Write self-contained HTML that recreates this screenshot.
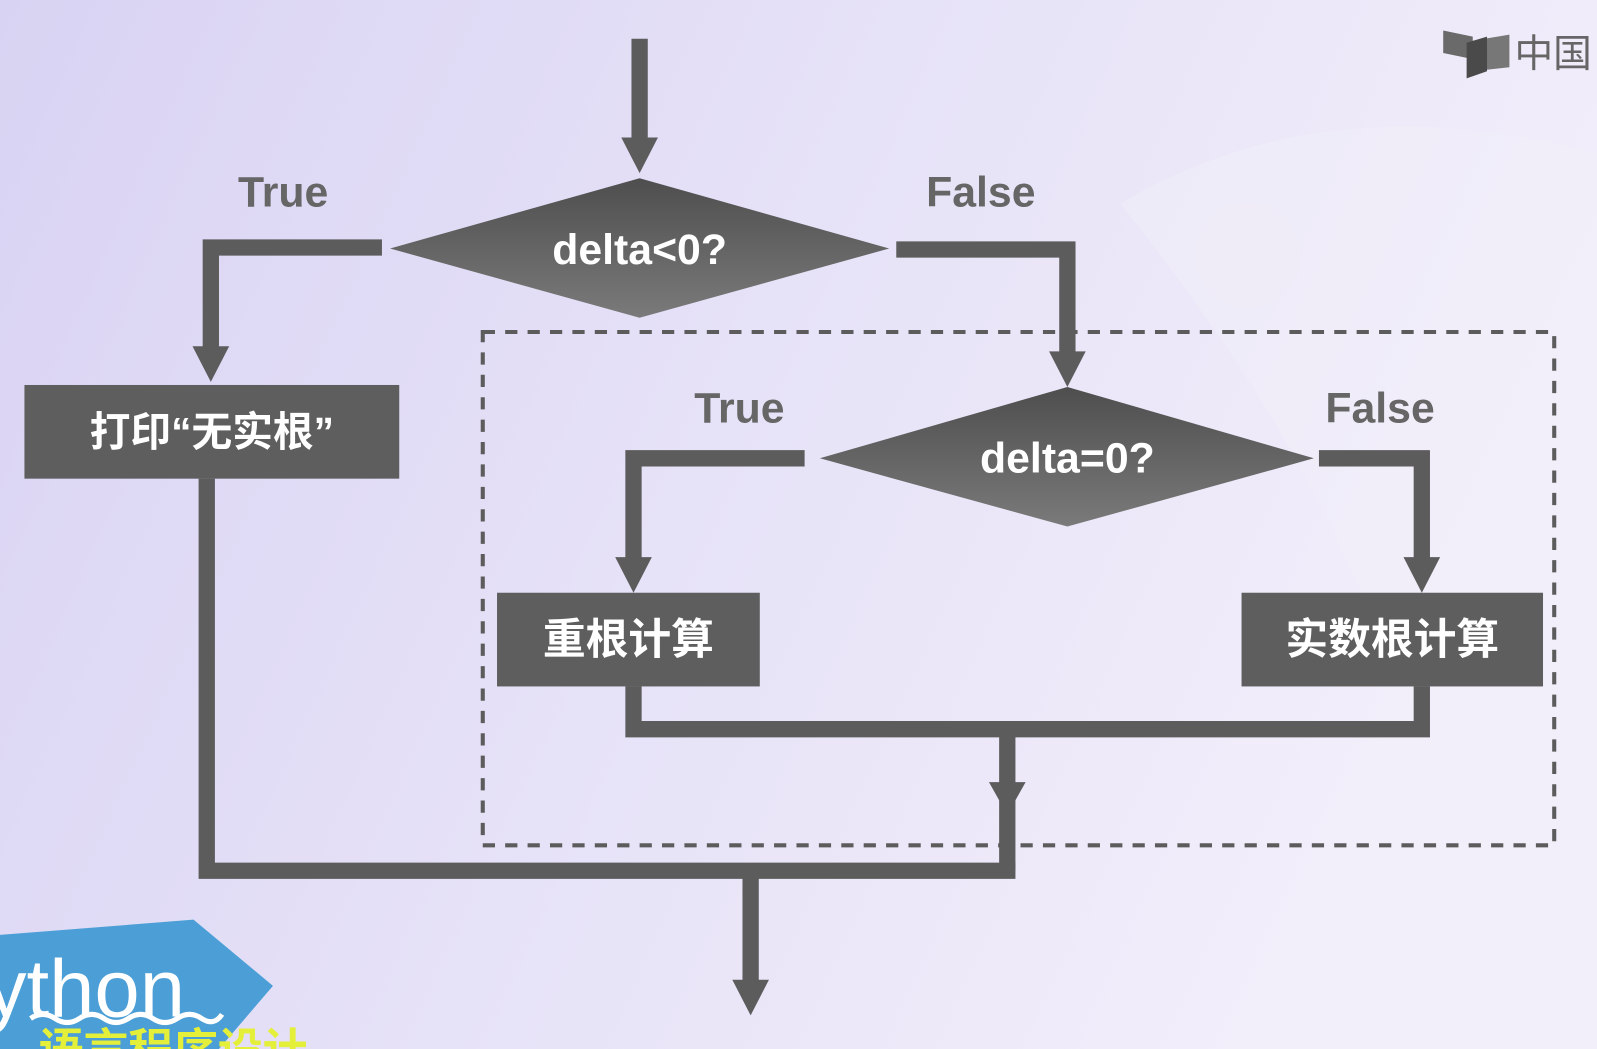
<!DOCTYPE html>
<html><head><meta charset="utf-8"><style>
html,body{margin:0;padding:0;width:1597px;height:1049px;overflow:hidden;}
svg{display:block}
</style></head><body>
<svg width="1597" height="1049" viewBox="0 0 1568 1030" preserveAspectRatio="none" xmlns="http://www.w3.org/2000/svg" font-family="'Liberation Sans','Noto Sans CJK SC',sans-serif">
<defs>
<linearGradient id="bg" x1="0" y1="0" x2="1" y2="0.3">
<stop offset="0" stop-color="#d9d3f3"/><stop offset="0.6" stop-color="#e8e4f8"/><stop offset="1" stop-color="#f2eefa"/>
</linearGradient>
<linearGradient id="dg" x1="0" y1="0" x2="0" y2="1">
<stop offset="0" stop-color="#4e4e4e"/><stop offset="1" stop-color="#7a7a7a"/>
</linearGradient>
</defs>
<rect width="1568" height="1030" fill="url(#bg)"/>
<circle cx="1225" cy="250" r="52" fill="#ece8f6" opacity="0.7"/>
<path d="M1100 200 Q1300 80 1568 150 L1568 1030 L1350 1030 Q1500 700 1100 200Z" fill="#f2eff9" opacity="0.5"/>

<g stroke="#5c5c5c" stroke-width="16" fill="none" stroke-linejoin="miter" stroke-linecap="butt">
<path d="M628 38 V140"/>
<path d="M375 243 H207 V345"/>
<path d="M880 245 H1048 V350"/>
<path d="M790 450 H622 V552"/>
<path d="M1295 450 H1396 V552"/>
<path d="M622 674 V716 H1396 V674"/>
<path d="M989 716 V855"/>
<path d="M203 470 V855 H997"/>
<path d="M737 855 V968"/>
</g>
<g fill="#5c5c5c">
<polygon points="610,135 646,135 628,170"/>
<polygon points="189,340 225,340 207,375"/>
<polygon points="1030,345 1066,345 1048,380"/>
<polygon points="604,547 640,547 622,582"/>
<polygon points="1378,547 1414,547 1396,582"/>
<polygon points="971,768 1007,768 989,800"/>
<polygon points="719,962 755,962 737,997"/>
</g>
<rect x="474" y="326" width="1052" height="504" fill="none" stroke="#5c5c5c" stroke-width="4" stroke-dasharray="12 10"/>

<polygon points="383,244 628,175 873,244 628,312" fill="url(#dg)"/>
<polygon points="805,450 1048,380 1290,450 1048,517" fill="url(#dg)"/>
<rect x="24" y="378" width="368" height="92" fill="#5e5e5e"/>
<rect x="488" y="582" width="258" height="92" fill="#5e5e5e"/>
<rect x="1219" y="582" width="296" height="92" fill="#5e5e5e"/>

<g fill="#fff" font-weight="bold" text-anchor="middle">
<text x="628" y="259" font-size="42">delta&lt;0?</text>
<text x="1048" y="464" font-size="42">delta=0?</text>
<text x="208" y="438" font-size="40">打印“无实根”</text>
<text x="617" y="642" font-size="42">重根计算</text>
<text x="1367" y="642" font-size="42">实数根计算</text>
</g>
<g fill="#666" font-weight="bold" text-anchor="middle" font-size="42">
<text x="278" y="203">True</text>
<text x="963" y="203">False</text>
<text x="726" y="415">True</text>
<text x="1355" y="415">False</text>
</g>

<g>
<polygon points="1417,30 1446,36 1446,58 1417,52" fill="#6a6a6a"/>
<polygon points="1446,40 1482,34 1482,66 1446,70" fill="#777"/>
<polygon points="1440,42 1460,36 1460,70 1440,77" fill="#4a4a4a"/>
<text x="1487" y="66" font-size="38" fill="#666" font-family="'Noto Sans CJK SC',sans-serif">中国</text>
</g>

<g>
<polygon points="0,918 190,903 268,968 215,1030 0,1030" fill="#4b9fd6"/>
<text x="-14" y="998" font-size="80" fill="#fff" font-family="'Liberation Sans',sans-serif">ython</text>
<path d="M30 1000 q12 -8 24 0 t24 0 t24 0 t24 0 t24 0 t24 0 t24 0 t20 -4" stroke="#fff" stroke-width="5" fill="none"/>
<text x="38" y="1046" font-size="44" font-weight="bold" fill="#e4ef3a" font-family="'Noto Sans CJK SC',sans-serif">语言程序设计</text>
</g>
</svg>
</body></html>
